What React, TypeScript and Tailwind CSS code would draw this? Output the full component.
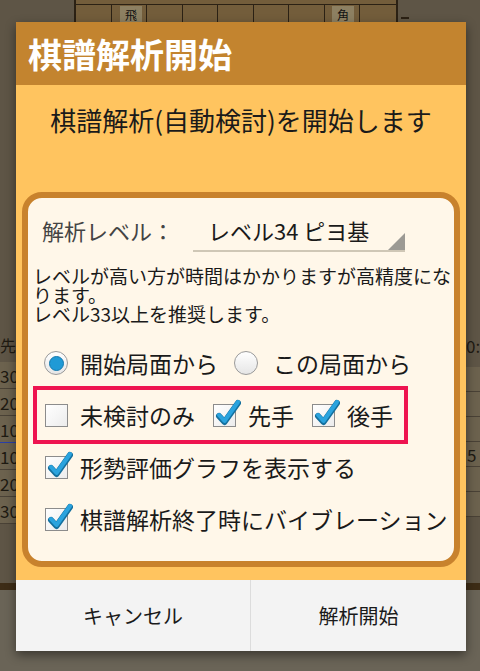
import React from "react"

const font = { fontFamily: '"Noto Sans CJK JP", "Noto Sans", sans-serif' }

function Radio({ checked, className = "" }: { checked?: boolean; className?: string }) {
    return (
        <span className={`flex h-[24px] w-[24px] shrink-0 items-center justify-center rounded-full border-[1.5px] border-[#9a9a9a] bg-gradient-to-b from-white to-[#e6e6e6] ${className}`}>
            {checked && <span className="h-[15px] w-[15px] rounded-full border border-[#1479ad] bg-[#1f9ad6]" />}
        </span>
    )
}

function Check({ checked, className = "" }: { checked?: boolean; className?: string }) {
    return (
        <span className={`relative block h-[23px] w-[23px] shrink-0 border border-[#8c8c8c] bg-gradient-to-br from-white to-[#ececec] ${className}`}>
            {checked && (
                <svg className="absolute -top-[7px] left-[1px]" width="26" height="28" viewBox="0 0 26 28">
                    <path d="M4 18 L9.5 24 L23 5" fill="none" stroke="#14709e" strokeWidth="6" strokeLinecap="round" strokeLinejoin="round" />
                    <path d="M4 17 L9.5 23 L23 4" fill="none" stroke="#2aa3de" strokeWidth="4" strokeLinecap="round" strokeLinejoin="round" />
                </svg>
            )}
        </span>
    )
}

function Background() {
    const cols = Array.from({ length: 9 })
    const left = ["300", "200", "100", "10", "20", "30"]
    return (
        <div className="absolute inset-0">
            {/* board */}
            <div className="absolute left-[74px] top-0 h-[330px] w-[324px] border-x-2 border-[#2b2114] bg-[#735d3b]">
                <div className="mt-[4px] grid h-full grid-cols-9 border-t border-[#2b2114]">
                    {cols.map((_, i) => (
                        <div key={i} className="border-r border-[#2b2114] last:border-r-0" />
                    ))}
                </div>
                <div className="absolute left-[44px] top-[6px] h-[17px] w-[22px] bg-[#8d8062] text-center text-[12px] leading-[17px] text-[#111]" style={font}>飛</div>
                <div className="absolute left-[256px] top-[6px] h-[17px] w-[22px] bg-[#8d8062] text-center text-[12px] leading-[17px] text-[#111]" style={font}>角</div>
            </div>
            <div className="absolute left-[401px] top-[17px] h-[2px] w-[8px] bg-[#2b2114]" />
            {/* side tables */}
            <div className="absolute left-0 top-[333px] text-[16px] text-[#1e1a12]" style={font}>先手</div>
            <div className="absolute left-0 top-[362px] w-[20px] bg-[#6c624e]">
                {left.map((n, i) => (
                    <div key={n} className={`h-[27px] border-b text-[17px] leading-[27px] text-[#1e1a12] ${i === 2 ? "border-[#2a3fa8]" : "border-[#4a4236]"}`} style={font}>{n}</div>
                ))}
            </div>
            <div className="absolute right-0 top-[333px] w-[14px] overflow-hidden whitespace-nowrap text-[17px] text-[#1e1a12]" style={font}>0:0</div>
            <div className="absolute right-0 top-[367px] w-[14px] bg-[#6c624e]">
                {["", "", "", "5", "", ""].map((n, i) => (
                    <div key={i} className="h-[25px] border-b border-[#4a4236] pl-[1px] text-[17px] leading-[25px] text-[#1e1a12]" style={font}>{n}</div>
                ))}
            </div>
            <div className="absolute left-0 top-[583px] h-[7px] w-full bg-[#3d2c16]" />
            <div className="absolute left-0 top-[590px] h-[81px] w-full bg-[#6a6457]" />
        </div>
    )
}

export default function App() {
    return (
        <div className="relative h-[671px] w-[480px] overflow-hidden bg-[#5e5546]" style={font}>
            <Background />

            <div className="absolute left-[16px] top-[22px] w-[450px] shadow-[0_4px_10px_rgba(0,0,0,0.45)]">
                {/* Title */}
                <div className="flex h-[63px] items-center bg-[#c3842f] px-[12px]">
                    <h1 className="text-[34px] font-bold leading-none text-white">棋譜解析開始</h1>
                </div>

                {/* Body */}
                <div className="flex flex-col bg-[#ffc45f] px-[6px] pb-[13px]">
                    <p className="pt-[17px] text-center text-[26px] leading-[36px] text-[#1a1a1a]">棋譜解析(自動検討)を開始します</p>

                    <div className="mt-[54px] flex flex-col rounded-[20px] border-[6px] border-[#c8822d] bg-[#fff7e9] pb-[22px] pl-[5px] pr-[1px]">
                        {/* Level */}
                        <div className="mt-[12px] flex items-start pl-[9px]">
                            <span className="w-[151px] text-[22px] leading-[40px] text-[#444]">解析レベル：</span>
                            <div className="relative h-[42px] w-[212px] border-b-2 border-[#cfc7b6] pl-[15px]">
                                <span className="text-[22px] leading-[40px] text-[#1a1a1a]">レベル34 ピヨ基</span>
                                <span className="absolute bottom-0 right-0 h-0 w-0 border-b-[17px] border-l-[17px] border-b-[#9c9a94] border-l-transparent" />
                            </div>
                        </div>

                        {/* Description */}
                        <p className="mt-[14px] text-[19px] leading-[19px] text-[#1a1a1a]">
                            レベルが高い方が時間はかかりますが高精度になります。<br />レベル33以上を推奨します。
                        </p>

                        {/* Radio */}
                        <div className="mt-[20px] flex h-[40px] items-center pl-[11px] text-[23px] text-[#1a1a1a]">
                            <Radio checked />
                            <span className="ml-[12px]">開始局面から</span>
                            <Radio className="ml-[16px]" />
                            <span className="ml-[15px]">この局面から</span>
                        </div>

                        {/* Highlighted checks */}
                        <div className="mt-[3px] flex h-[58px] w-[375px] items-center border-4 border-[#ee1450] pl-[8px] text-[23px] text-[#1a1a1a]">
                            <Check />
                            <span className="ml-[12px]">未検討のみ</span>
                            <Check checked className="ml-[18px]" />
                            <span className="ml-[12px]">先手</span>
                            <Check checked className="ml-[18px]" />
                            <span className="ml-[12px]">後手</span>
                        </div>

                        <div className="mt-[3px] flex h-[40px] items-center pl-[12px] text-[23px] text-[#1a1a1a]">
                            <Check checked />
                            <span className="ml-[12px]">形勢評価グラフを表示する</span>
                        </div>

                        <div className="mt-[12px] flex h-[40px] items-center pl-[12px] text-[23px] text-[#1a1a1a]">
                            <Check checked />
                            <span className="ml-[12px] whitespace-nowrap">棋譜解析終了時にバイブレーション</span>
                        </div>
                    </div>
                </div>

                {/* Buttons */}
                <div className="flex h-[71px] bg-[#f3f3f3] text-[20px] text-[#1a1a1a]">
                    <button className="flex w-[235px] items-center justify-center border-r border-[#dcdcdc]">キャンセル</button>
                    <button className="flex flex-1 items-center justify-center">解析開始</button>
                </div>
            </div>
        </div>
    )
}
